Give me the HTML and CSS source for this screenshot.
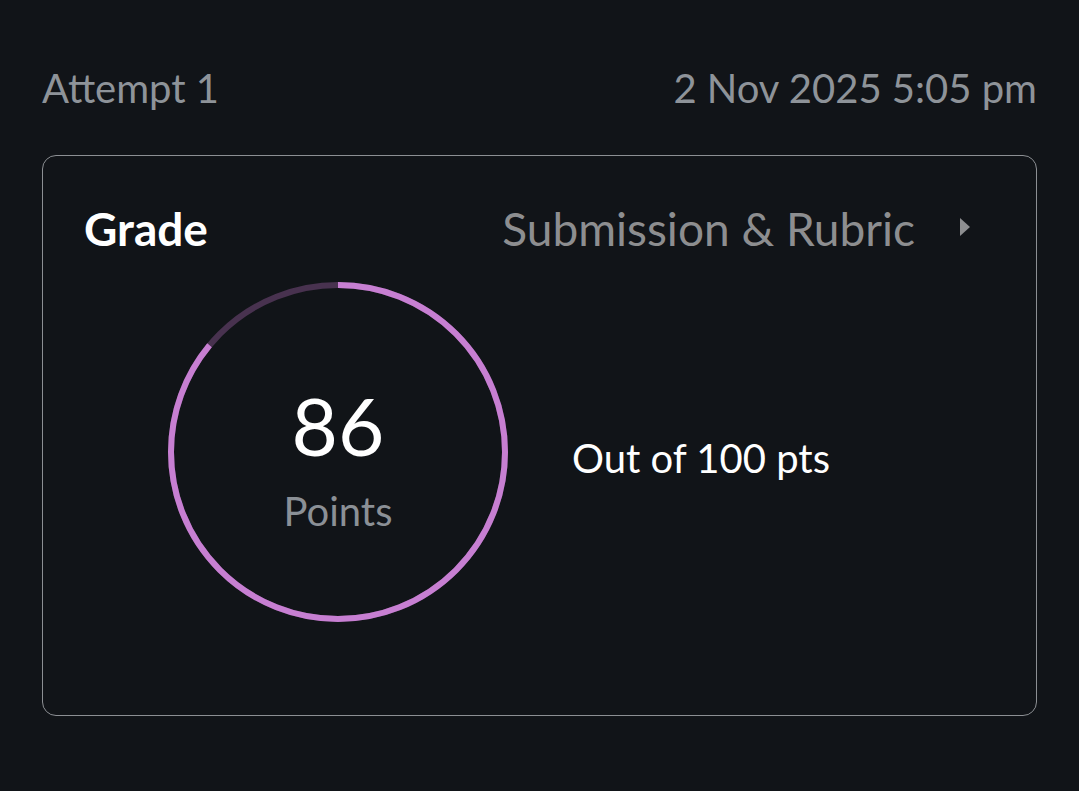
FILE: index.html
```html
<!DOCTYPE html>
<html lang="en">
<head>
<meta charset="utf-8">
<title>Attempt 1</title>
<link rel="stylesheet" href="styles.css">
</head>
<body>
<div class="page">
  <div class="attempt-row">
    <span class="attempt">Attempt 1</span>
    <span class="date">2 Nov 2025 5:05 pm</span>
  </div>
  <section class="card">
    <div class="card-head">
      <h2 class="grade">Grade</h2>
      <a class="link">
        <span>Submission &amp; Rubric</span>
        <svg class="caret" width="12" height="20" viewBox="0 0 12 20"><path d="M1 1 L11 10 L1 19 Z" fill="#8d8e90"/></svg>
      </a>
    </div>
    <div class="score-row">
      <div class="ring">
        <svg class="ring-svg" width="344" height="344" viewBox="0 0 344 344">
          <circle cx="172" cy="172" r="167" fill="none" stroke="#48324f" stroke-width="6"/>
          <circle cx="172" cy="172" r="167" fill="none" stroke="#c77fd2" stroke-width="6"
            stroke-dasharray="902.38 1049.29" transform="rotate(-90 172 172)"/>
        </svg>
        <div class="ring-text">
          <span class="value">86</span>
          <span class="unit">Points</span>
        </div>
      </div>
      <div class="out-of">Out of 100 pts</div>
    </div>
  </section>
</div>
</body>
</html>
```
FILE: styles.css
```css
html, body {
  margin: 0;
  padding: 0;
  background: #111418;
}
body {
  font-family: Lato, "Open Sans", sans-serif;
  color: #ffffff;
}
.page {
  padding: 63px 42px 0 42px;
}
.attempt-row {
  display: flex;
  justify-content: space-between;
  align-items: baseline;
  font-size: 40px;
  line-height: 50px;
  color: #8e9399;
}
.card {
  margin-top: 42px;
  border: 1px solid #8c8f93;
  border-radius: 14px;
  padding: 46px 65px 92px 41px;
  height: 561px;
  box-sizing: border-box;
}
.card-head {
  display: flex;
  justify-content: space-between;
  align-items: center;
  height: 53px;
}
.grade {
  margin: 0;
  font-size: 46px;
  line-height: 53px;
  font-weight: 700;
  color: #ffffff;
}
.link {
  display: flex;
  align-items: center;
  gap: 44px;
  font-size: 46px;
  line-height: 53px;
  color: #8d8e90;
}
.caret {
  margin-top: -4px;
}
.score-row {
  display: flex;
  align-items: center;
  margin-top: 25px;
  padding-left: 82px;
  gap: 62px;
}
.ring {
  display: grid;
  width: 344px;
  height: 344px;
}
.ring-svg, .ring-text {
  grid-area: 1 / 1;
}
.ring-text {
  display: flex;
  flex-direction: column;
  align-items: center;
  justify-content: center;
  padding-top: 16px;
  gap: 22px;
}
.value {
  font-size: 80px;
  line-height: 80px;
  color: #ffffff;
}
.unit {
  font-size: 40px;
  line-height: 48px;
  color: #8b9096;
}
.out-of {
  font-size: 40px;
  line-height: 48px;
  color: #ffffff;
  margin-top: 12px;
}
```
